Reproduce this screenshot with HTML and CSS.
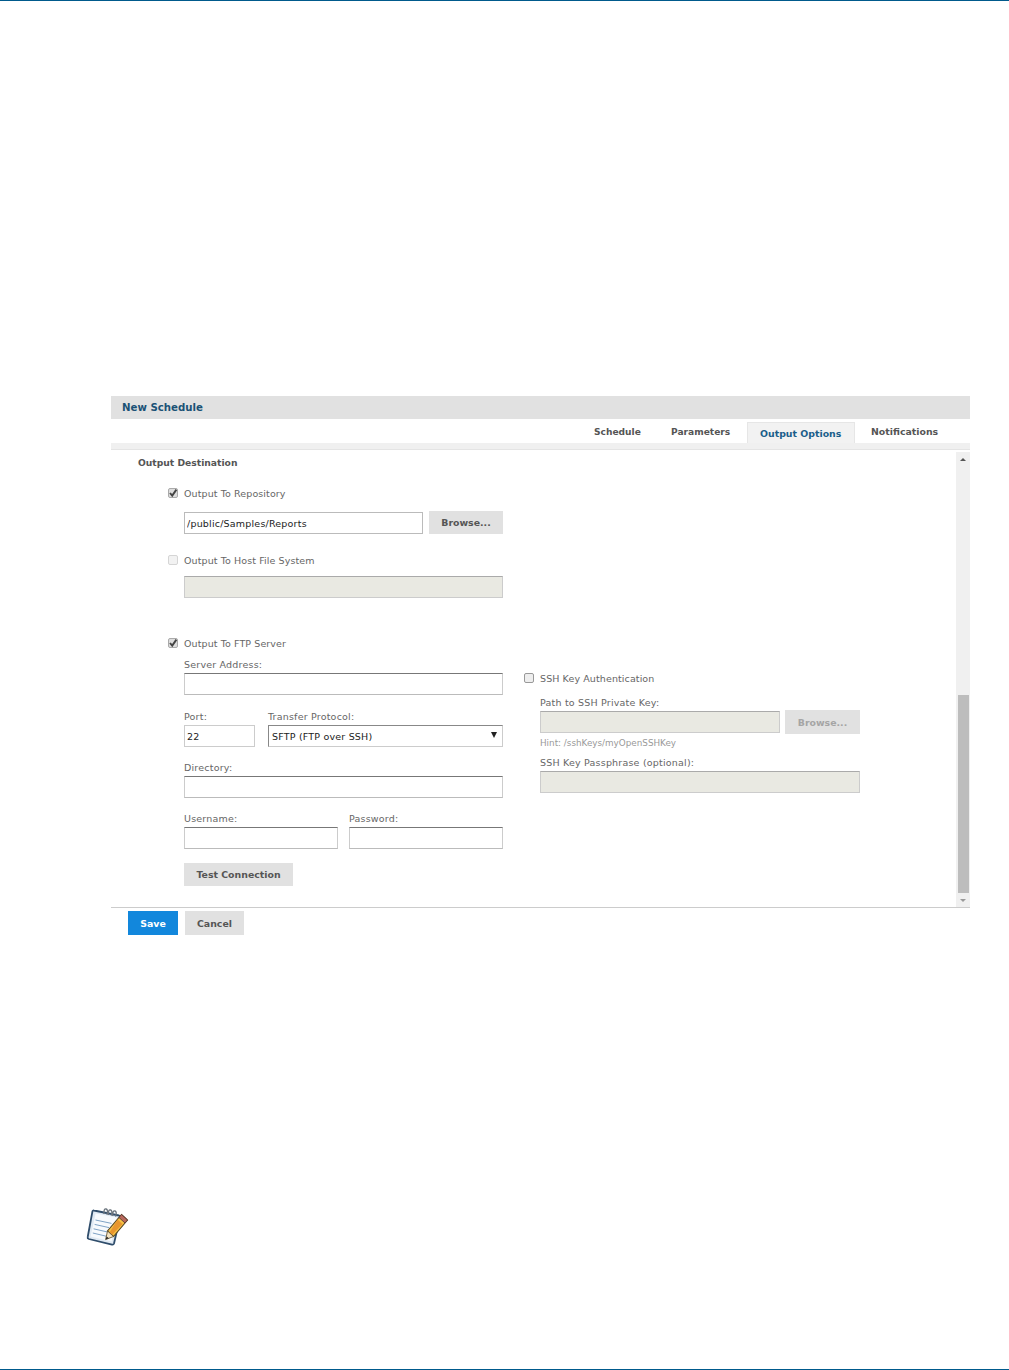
FILE: index.html
```html
<!DOCTYPE html>
<html lang="en">
<head>
<meta charset="utf-8">
<title>New Schedule</title>
<link rel="stylesheet" href="styles.css">
</head>
<body>
<div class="page">
  <section class="panel">
    <h1 class="title">New Schedule</h1>
    <nav class="tabs">
      <span class="tab tab-schedule">Schedule</span>
      <span class="tab tab-parameters">Parameters</span>
      <span class="tab tab-active">Output Options</span>
      <span class="tab tab-notifications">Notifications</span>
    </nav>
    <div class="strip"></div>
    <div class="body">
      <div class="form">
        <h2 class="section">Output Destination</h2>

        <div class="check-row row-repo"><span class="box checked"><svg viewBox="0 0 10 10" width="10" height="10"><path d="M2 5l2.2 2.6L8.4 1.6" fill="none" stroke="#444" stroke-width="1.9"/></svg></span><span class="check-label">Output To Repository</span></div>
        <div class="indent line repo-line">
          <input class="field repo-field" type="text" value="/public/Samples/Reports">
          <button class="btn browse">Browse...</button>
        </div>

        <div class="check-row row-host"><span class="box light"></span><span class="check-label">Output To Host File System</span></div>
        <div class="indent host-line"><input class="field off wide" type="text" disabled></div>

        <div class="check-row row-ftp"><span class="box checked"><svg viewBox="0 0 10 10" width="10" height="10"><path d="M2 5l2.2 2.6L8.4 1.6" fill="none" stroke="#444" stroke-width="1.9"/></svg></span><span class="check-label">Output To FTP Server</span></div>

        <div class="ftp">
          <div class="ftp-left">
            <label class="lbl lbl-server">Server Address:</label>
            <input class="field wide dark" type="text">
            <div class="line port-line">
              <div class="port-col">
                <label class="lbl">Port:</label>
                <input class="field port-field" type="text" value="22">
              </div>
              <div class="proto-col">
                <label class="lbl">Transfer Protocol:</label>
                <div class="select">SFTP (FTP over SSH)<span class="arrow"></span></div>
              </div>
            </div>
            <label class="lbl lbl-dir">Directory:</label>
            <input class="field wide dark" type="text">
            <div class="line user-line">
              <div class="user-col">
                <label class="lbl">Username:</label>
                <input class="field user-field dark" type="text">
              </div>
              <div class="user-col">
                <label class="lbl">Password:</label>
                <input class="field user-field dark" type="text">
              </div>
            </div>
            <button class="btn test">Test Connection</button>
          </div>
          <div class="ftp-right">
            <div class="check-row ssh-row"><span class="box plain"></span><span class="check-label">SSH Key Authentication</span></div>
            <div class="ssh-fields">
              <label class="lbl lbl-path">Path to SSH Private Key:</label>
              <div class="line key-line">
                <input class="field off key-field" type="text" disabled>
                <button class="btn browse2" disabled>Browse...</button>
              </div>
              <p class="hint">Hint: /sshKeys/myOpenSSHKey</p>
              <label class="lbl lbl-pass">SSH Key Passphrase (optional):</label>
              <input class="field off pass-field" type="text" disabled>
            </div>
          </div>
        </div>
      </div>
      <div class="scroll">
        <span class="up"></span>
        <span class="thumb"></span>
        <span class="down"></span>
      </div>
    </div>
    <footer class="actions">
      <button class="btn save">Save</button>
      <button class="btn cancel">Cancel</button>
    </footer>
  </section>

  <svg class="note" viewBox="0 0 46 46" width="46" height="46">
    <path d="M10 7.5 L35 12.5 Q36.5 13 36 14.5 L30 40.5 Q29.5 42 28 41.6 L4.8 36 Q3.3 35.5 3.7 34 L8.4 8.6 Q8.7 7.2 10 7.5 Z" fill="#dfe9f3" stroke="#2f4d6b" stroke-width="1.8" stroke-linejoin="round"/>
    <path d="M11.6 10.4 L33 14.6 L27.6 38.4 L6.6 33.4 Z" fill="#f7fafd"/>
    <path d="M11.5 17 L27.5 20.4 M10.6 21.4 L25 24.6 M9.6 25.8 L23.5 29 M8.8 30 L25.5 34" stroke="#7fa3c6" stroke-width="1"/>
    <path d="M20 11 q-0.5 -5.5 2.2 -5 q2.2 0.6 0.6 5.6 M24.4 12 q-0.5 -5.5 2.2 -5 q2.2 0.6 0.6 5.6 M28.8 13 q-0.5 -5.5 2.2 -5 q2.2 0.6 0.6 5.6" fill="none" stroke="#6b747d" stroke-width="1.3"/>
    <path d="M37.5 11.5 L43.5 17 L29.5 33.5 L23.5 28 Z" fill="#f7c244" stroke="#5a4822" stroke-width="1.1"/>
    <path d="M33.5 16.5 L38.5 21 L28 32 L25.5 29.5 Z" fill="#e8962e"/>
    <path d="M37.5 11.5 L43.5 17 L41 20 L35 14.5 Z" fill="#b9685c" stroke="#5a3a34" stroke-width="0.9"/>
    <path d="M23.5 28 L29.5 33.5 L21.6 36.6 Z" fill="#f4e3c1" stroke="#5a4822" stroke-width="0.8"/>
    <path d="M21.6 36.6 L22.7 33.6 L24.8 35.3 Z" fill="#222"/>
  </svg>
</div>
</body>
</html>
```

FILE: styles.css
```css
* { box-sizing: border-box; }
html, body { margin: 0; padding: 0; background: #fff; }
body { font-family: "DejaVu Sans", Verdana, sans-serif; font-size: 9px; color: #666; }

.page {
  height: 1370px;
  border-top: 1px solid #005a8c;
  border-bottom: 1px solid #005a8c;
  padding: 395px 39px 0 0;
  overflow: hidden;
}

.panel { margin-left: 111px; width: 859px; }

.title {
  margin: 0;
  height: 23px;
  padding-left: 11px;
  background: #e1e1e1;
  color: #1b5276;
  font-size: 10.2px;
  font-weight: bold;
  line-height: 23px;
}

.tabs {
  display: flex;
  height: 24px;
  align-items: flex-start;
}
.tab { font-size: 9.4px; font-weight: bold; color: #555; line-height: 25px; white-space: nowrap; }
.tab-schedule { margin-left: 483px; width: 77px; font-size: 9.1px; line-height: 26px; }
.tab-parameters { width: 76px; font-size: 9.1px; line-height: 26px; }
.tab-active {
  width: 108px;
  height: 21px;
  margin: 3px 16px 0 0;
  padding-left: 12px;
  background: #f2f2f2;
  border: 1px solid #e6e6e6;
  border-bottom: 0;
  color: #1b5e8a;
  line-height: 21px;
}
.strip { height: 7px; background: #f0f0f0; border-bottom: 1px solid #e4e4e4; }

.body { display: flex; height: 458px; border-bottom: 1px solid #ccc; }
.form { flex: 1; padding: 6px 0 0 27px; }
.section { margin: 0; font-size: 9.2px; font-weight: bold; color: #555; line-height: 14px; }

.check-row { display: flex; align-items: center; height: 14px; margin-left: 30px; }
.row-repo { margin-top: 16px; }
.row-host { margin-top: 18px; }
.row-ftp { margin-top: 38px; }
.box {
  width: 10px; height: 10px; margin-right: 6px; flex: none;
  border: 1px solid #bbb; border-radius: 2px; background: #e8e8e8;
  display: block; position: relative;
}
.box svg { position: absolute; left: -1px; top: -1px; }
.box.checked { background: #ddd; border-color: #aaa; }
.box.light { background: #f2f2f2; border-color: #d5d5d5; }
.box.plain { background: #eee; border-color: #999; }
.check-label { font-size: 9.5px; letter-spacing: .1px; color: #666; white-space: nowrap; }

.indent { margin-left: 46px; }
.line { display: flex; }
.repo-line { margin-top: 12px; gap: 6px; height: 23px; }
.host-line { margin-top: 9px; }

.field {
  display: block;
  height: 22px;
  margin: 0;
  padding: 0 2px;
  background: #fff;
  border: 1px solid #ccc;
  border-radius: 0;
  font: 9.5px "DejaVu Sans", Verdana, sans-serif;
  letter-spacing: .2px;
  color: #222;
  outline: 0;
}
.field.dark { border-color: #777 #ccc #bbb #ccc; }
.field.off { background: #e9e9e2; border-color: #aaa #ccc #ccc #ccc; }
.wide { width: 319px; }
.repo-field { width: 239px; border-color: #bbb; }

.btn {
  display: block; margin: 0; padding: 0; border: 0; border-radius: 0;
  background: #e1e1e1; color: #555;
  font: bold 9.4px "DejaVu Sans", Verdana, sans-serif;
  text-align: center;
}
.browse { width: 74px; height: 23px; margin-top: -1px; }

.ftp { display: flex; margin-left: 46px; }
.ftp-left { width: 319px; flex: none; padding-top: 8px; }
.lbl { display: block; font-size: 9.5px; line-height: 14px; color: #666; letter-spacing: .2px; white-space: nowrap; }
.lbl-server { height: 15px; }
.port-line { margin-top: 14px; gap: 13px; }
.port-line .lbl, .user-line .lbl { height: 16px; padding-top: 1px; }
.port-field { width: 71px; }
.proto-col { width: 235px; }
.select {
  position: relative;
  height: 22px;
  padding-left: 3px;
  border: 1px solid #ccc;
  border-top-color: #888;
  border-left-color: #888;
  font-size: 9.5px;
  letter-spacing: .2px;
  line-height: 21px;
  color: #222;
}
.arrow {
  position: absolute; right: 5px; top: 6px;
  border-left: 3px solid transparent; border-right: 3px solid transparent;
  border-top: 6px solid #222;
}
.lbl-dir { margin-top: 13px; height: 16px; padding-top: 1px; }
.user-line { margin-top: 13px; gap: 11px; }
.user-field { width: 154px; }
.test { width: 109px; height: 23px; margin-top: 14px; }

.ftp-right { width: 336px; margin-left: 21px; }
.ssh-row { margin: 21px 0 0 0; }
.ssh-fields { margin-left: 16px; }
.lbl-path { margin-top: 11px; height: 15px; }
.key-line { gap: 5px; margin-top: -1px; align-items: center; height: 24px; }
.key-field { width: 240px; }
.browse2 { width: 75px; height: 24px; color: #a5a5a5; }
.hint { margin: 3px 0 0; font-size: 8.8px; line-height: 12px; color: #999; white-space: nowrap; }
.lbl-pass { margin-top: 7px; height: 15px; }
.pass-field { width: 320px; }

.scroll { position: relative; width: 14px; margin-top: 2px; background: #f0f0f0; flex: none; }
.up, .down { position: absolute; left: 4px; border-left: 3px solid transparent; border-right: 3px solid transparent; }
.up { top: 6px; border-bottom: 3px solid #555; }
.down { bottom: 5px; border-top: 3px solid #999; }
.thumb { position: absolute; left: 2px; right: 1px; top: 243px; height: 198px; background: #bdbdbd; }

.actions { display: flex; gap: 7px; margin: 3px 0 0 17px; }
.save { width: 50px; height: 24px; background: #1287dc; color: #fff; }
.cancel { width: 59px; height: 24px; }

.note { display: block; margin: 268px 0 0 84px; }
```
